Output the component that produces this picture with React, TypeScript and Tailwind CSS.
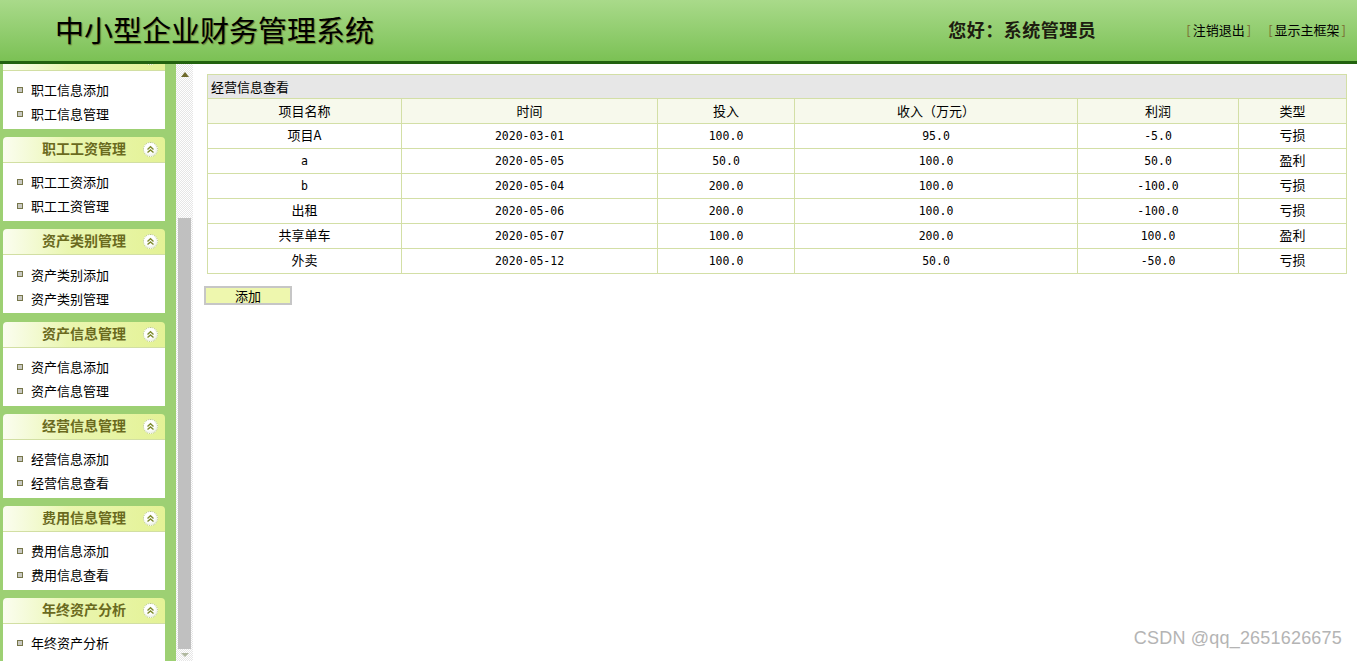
import React from "react";

const cjk = { fontFamily: '"Noto Sans CJK SC", "Liberation Sans", sans-serif' };
const mono = { fontFamily: '"DejaVu Sans Mono", "Liberation Mono", "Noto Sans CJK SC", monospace' };

const panels = [
  { title: "职工信息管理", items: ["职工信息添加", "职工信息管理"] },
  { title: "职工工资管理", items: ["职工工资添加", "职工工资管理"] },
  { title: "资产类别管理", items: ["资产类别添加", "资产类别管理"] },
  { title: "资产信息管理", items: ["资产信息添加", "资产信息管理"] },
  { title: "经营信息管理", items: ["经营信息添加", "经营信息查看"] },
  { title: "费用信息管理", items: ["费用信息添加", "费用信息查看"] },
  { title: "年终资产分析", items: ["年终资产分析"] },
];

const rows = [
  ["项目A", "2020-03-01", "100.0", "95.0", "-5.0", "亏损"],
  ["a", "2020-05-05", "50.0", "100.0", "50.0", "盈利"],
  ["b", "2020-05-04", "200.0", "100.0", "-100.0", "亏损"],
  ["出租", "2020-05-06", "200.0", "100.0", "-100.0", "亏损"],
  ["共享单车", "2020-05-07", "100.0", "200.0", "100.0", "盈利"],
  ["外卖", "2020-05-12", "100.0", "50.0", "-50.0", "亏损"],
];

const heads = ["项目名称", "时间", "投入", "收入（万元）", "利润", "类型"];
const widths = ["w-[194px]", "w-[256px]", "w-[137px]", "w-[283px]", "w-[161px]", "w-[108px]"];

function isAscii(s: string) {
  return /^[\x00-\x7f]+$/.test(s);
}

function FoldIcon() {
  return (
    <span className="absolute right-[7px] top-[5px] flex h-[15px] w-[15px] items-center justify-center rounded-full border border-dotted border-[#b9c98a] bg-[radial-gradient(circle_at_40%_35%,#ffffff_0%,#ffffff_45%,#dfe6cf_100%)]">
      <svg width="9" height="9" viewBox="0 0 9 9">
        <path d="M1.5 4.5 L4.5 1.8 L7.5 4.5" stroke="#7d8a2c" strokeWidth="1.4" fill="none" />
        <path d="M1.5 7.6 L4.5 4.9 L7.5 7.6" stroke="#7d8a2c" strokeWidth="1.4" fill="none" />
      </svg>
    </span>
  );
}

function Panel({ title, items, hideTitle }: { title: string; items: string[]; hideTitle?: boolean }) {
  return (
    <div className="w-[162px] shrink-0">
      <div className="relative flex h-[26px] items-center justify-center rounded-t-[4px] border-b border-[#d2dfa3] bg-gradient-to-r from-[#fbfdf0] via-[#eaf6b0] via-40% to-[#e4f296] pb-[2px]">
        <span className={`text-[14px] font-bold text-[#6a6a1e] ${hideTitle ? "invisible" : ""}`} style={cjk}>
          {title}
        </span>
        <FoldIcon />
      </div>
      <div className="h-[58px] bg-white pt-[7px]">
        {items.map((it) => (
          <div key={it} className="flex h-[24px] items-center pl-[14px]">
            <span className="mr-[8px] h-[6px] w-[6px] border border-[#76764a] bg-[#c9c9c2]" />
            <span className="text-[13px] text-black" style={cjk}>
              {it}
            </span>
          </div>
        ))}
      </div>
    </div>
  );
}

export default function App() {
  return (
    <div className="relative flex h-[661px] w-[1357px] flex-col overflow-hidden bg-white" style={cjk}>
      {/* Header */}
      <div className="flex h-[64px] shrink-0 items-center border-b-[3px] border-[#22620f] bg-gradient-to-b from-[#a9da8a] to-[#7bc154] pb-[2px]">
        <div
          className="ml-[55px] text-[29px] leading-none text-black [text-shadow:1px_1px_1px_#6b7a30]"
          style={cjk}
        >
          中小型企业财务管理系统
        </div>
        <div className="ml-auto text-[18px] font-bold tracking-[0.5px] text-[#1d1d10]" style={cjk}>
          您好：系统管理员
        </div>
        <div className="ml-[88px] mr-[9px] flex gap-[13px] text-[13px] text-black" style={cjk}>
          <span>
            <span className="px-[2px] text-[#7a6a30]">[</span>注销退出<span className="px-[2px] text-[#7a6a30]">]</span>
          </span>
          <span>
            <span className="px-[2px] text-[#7a6a30]">[</span>显示主框架<span className="px-[2px] text-[#7a6a30]">]</span>
          </span>
        </div>
      </div>

      <div className="flex min-h-0 flex-1">
        {/* Sidebar */}
        <div className="w-[176px] shrink-0 overflow-hidden bg-[#9dd073]">
          <div className="mt-[-19px] flex flex-col gap-[8.2px] pl-[3px]">
            {panels.map((p, i) => (
              <Panel key={p.title} title={p.title} items={p.items} hideTitle={i === 0} />
            ))}
          </div>
        </div>

        {/* Scrollbar */}
        <div className="flex w-[17px] shrink-0 flex-col items-center bg-[repeating-conic-gradient(#e6e6e6_0_25%,#ffffff_0_50%)] bg-[length:2px_2px]">
          <svg className="mt-[8px]" width="8" height="5" viewBox="0 0 8 5">
            <path d="M0 5 L4 0 L8 5 Z" fill="#6e6a2c" />
          </svg>
          <div className="mt-[141px] h-[431px] w-[13px] bg-[#c0c0c0]" />
          <svg className="mt-[4px]" width="8" height="4" viewBox="0 0 8 4">
            <path d="M0 0 L8 0 L4 4 Z" fill="#b0b8a0" />
          </svg>
        </div>

        {/* Main */}
        <div className="flex-1 pl-[14px] pr-[11px] pt-[10px]">
          <table className="w-[1139px] table-fixed border-collapse text-[13px] text-black">
            <colgroup>
              {widths.map((w, i) => (
                <col key={i} className={w} />
              ))}
            </colgroup>
            <tbody>
              <tr className="h-[24px]">
                <td colSpan={6} className="border border-[#d3dfa6] bg-[#e7e7e7] pl-[3px] text-left" style={cjk}>
                  经营信息查看
                </td>
              </tr>
              <tr className="h-[25px]">
                {heads.map((h) => (
                  <td
                    key={h}
                    className="border border-[#d3dfa6] bg-[#f7f9ec] pb-[1px] text-center"
                    style={cjk}
                  >
                    {h}
                  </td>
                ))}
              </tr>
              {rows.map((r, i) => (
                <tr key={i} className="h-[25px]">
                  {r.map((c, j) => (
                    <td key={j} className="border border-[#d3dfa6] p-0 pb-[2px] text-center">
                      {isAscii(c) ? (
                        <span className="text-[11.5px] font-normal" style={mono}>
                          {c}
                        </span>
                      ) : (
                        <span className="text-[13px]" style={cjk}>
                          {c}
                        </span>
                      )}
                    </td>
                  ))}
                </tr>
              ))}
            </tbody>
          </table>
          <button
            className="ml-[-3px] mt-[12px] flex h-[19px] w-[88px] items-center justify-center border-2 border-[#c6c6c6] bg-[#eef7ae] text-[13px] leading-none text-black"
            style={cjk}
          >
            添加
          </button>
        </div>
      </div>

      <div
        className="absolute bottom-[9px] right-[15px] text-[18px] tracking-[0.2px] text-[#b4b4b4]"
        style={{ fontFamily: '"Liberation Sans", "Noto Sans CJK SC", sans-serif' }}
      >
        CSDN @qq_2651626675
      </div>
    </div>
  );
}
